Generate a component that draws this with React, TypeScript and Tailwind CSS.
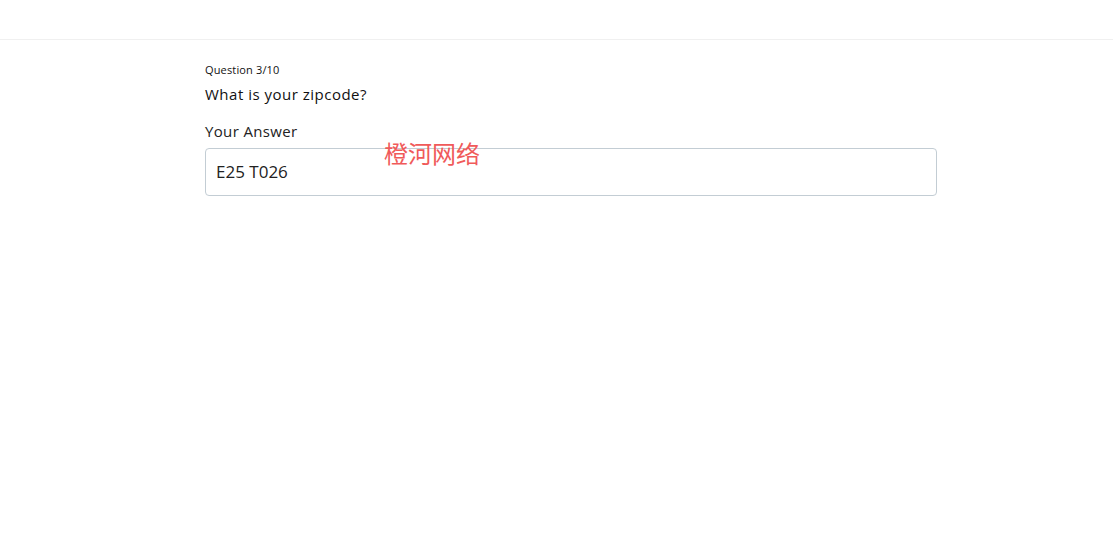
export default function App() {
  return (
    <div className="min-h-[558px] bg-white" style={{ fontFamily: '"Open Sans", "Noto Sans CJK SC", sans-serif' }}>
      <div className="h-[40px] border-b border-[#f0f0f0]" />
      <div className="pl-[205px] pt-[22px]">
        <div className="w-[732px] relative">
          <p className="text-[11px] leading-[16px] tracking-[0.15px] text-[#111]">Question 3/10</p>
          <p className="mt-[6px] text-[15px] leading-[20px] tracking-[0.5px] text-[#111]">What is your zipcode?</p>
          <p className="mt-[17px] text-[15px] leading-[20px] tracking-[0.35px] text-[#222]">Your Answer</p>
          <div className="mt-[7px] h-[48px] rounded-[4px] border border-[#c3cdd4] flex items-center px-[10px]">
            <span className="text-[17px] text-[#222]">E25 T026</span>
          </div>
          <span className="absolute left-[179px] top-[76px] text-[24px] leading-[30px] text-[#f05a5a]" style={{ fontFamily: '"Noto Sans CJK SC", sans-serif' }}>橙河网络</span>
        </div>
      </div>
    </div>
  );
}
